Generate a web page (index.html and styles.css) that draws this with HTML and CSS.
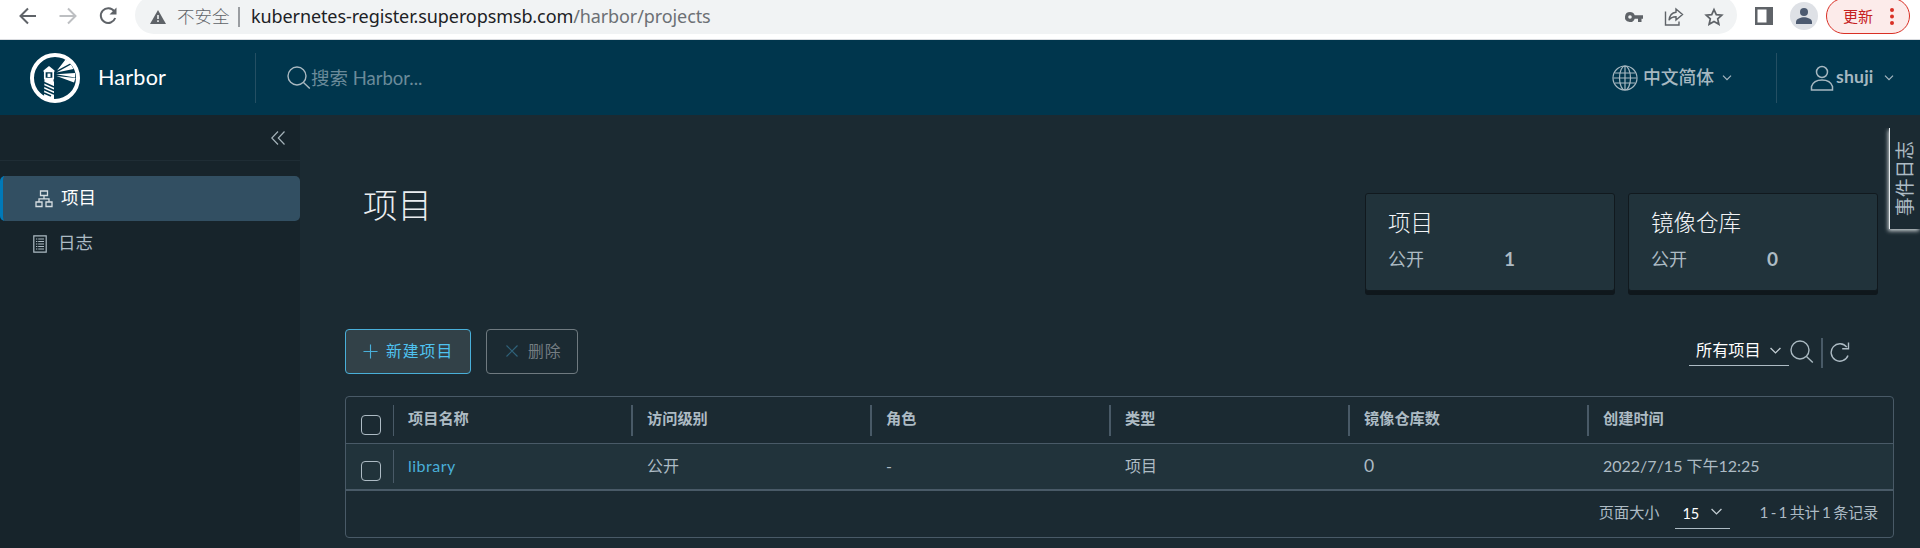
FILE: index.html
```html
<!DOCTYPE html>
<html lang="zh-CN">
<head>
<meta charset="utf-8">
<title>Harbor</title>
<link rel="stylesheet" href="styles.css">
</head>
<body>
<div class="chrome">
  <div class="nav-icons">
    <svg class="nav-icon" viewBox="0 0 20 20"><path d="M18 10H3M10 2.500L2.500 10l7.500 7.500" fill="none" stroke="#5f6368" stroke-width="2"/></svg>
    <svg class="nav-icon" viewBox="0 0 20 20"><path d="M1.500 10H17M10 2.500l7.500 7.500-7.500 7.500" fill="none" stroke="#bdbfc2" stroke-width="2"/></svg>
    <svg class="nav-icon" viewBox="0 0 20 20"><path d="M16.200 5.200A7.400 7.400 0 1 0 17.200 12" fill="none" stroke="#5f6368" stroke-width="2"/><path d="M18.500 1.500v7h-7z" fill="#5f6368"/></svg>
  </div>
  <div class="omnibox">
    <svg class="warn" viewBox="0 0 16 14"><path d="M8 0l8 14H0z" fill="#5f6368"/><path d="M7.200 5h1.600v4H7.200zM7.200 10.300h1.600v1.600H7.200z" fill="#f1f3f4"/></svg>
    <span class="insecure">不安全</span>
    <span class="omni-sep"></span>
    <span class="url">kubernetes-register.superopsmsb.com<span class="path">/harbor/projects</span></span>
    <svg class="omni-icon key" viewBox="0 0 20 20"><path d="M6 5a5 5 0 1 0 4.700 6.700H14V15h3.500v-3.300H19V8.300h-8.300A5 5 0 0 0 6 5zm0 3.200a1.800 1.800 0 1 1 0 3.600 1.800 1.800 0 0 1 0-3.600z" fill="#5f6368"/></svg>
    <svg class="omni-icon" viewBox="0 0 20 20"><path d="M1.500 4.500V18h13.500v-3.500M12 2l6.500 5.500L12 13V9.800c-3.500 0-5.500 1-7 3.400C5.500 8.500 8 5.700 12 5.200z" fill="none" stroke="#5f6368" stroke-width="1.400"/></svg>
    <svg class="omni-icon" viewBox="0 0 20 20"><path d="M10 2.600l2.300 5 5.500.6-4.100 3.700 1.200 5.400-4.900-2.800-4.900 2.800 1.200-5.400L2.200 8.200l5.500-.6z" fill="none" stroke="#5f6368" stroke-width="1.700"/></svg>
  </div>
  <svg class="panel" viewBox="0 0 18 18"><path d="M0 0h18v18H0zM2.500 2.500v13h9v-13z" fill="#5f6368" fill-rule="evenodd"/></svg>
  <svg class="avatar" viewBox="0 0 28 28"><circle cx="14" cy="14" r="14" fill="#dee1e6"/><circle cx="14" cy="10" r="4" fill="#4c5a70"/><path d="M6 22v-2.300c0-3 5-4.500 8-4.500s8 1.500 8 4.500V22z" fill="#4c5a70"/></svg>
  <div class="update"><span>更新</span><svg class="dots" viewBox="0 0 4 17"><circle cx="2" cy="2" r="2"/><circle cx="2" cy="8.500" r="2"/><circle cx="2" cy="15" r="2"/></svg></div>
</div>

<header class="header">
  <svg class="logo" viewBox="0 0 50 50">
    <circle cx="25" cy="25" r="23" fill="none" stroke="#fff" stroke-width="4"/>
    <path d="M27 17.500L35.500 6.500l5.500 3.500zM26.500 19.500l14.500-8 2.500 4.500zM26 21.300l19-1.300v4.500zM26.500 23l19 2-1.500 4.500z" fill="#fff"/>
    <path d="M19 13l5.500 4.500v1.300h-11v-1.300z" fill="#fff"/>
    <path d="M14.800 18.500h8.400v7h-8.400z" fill="none" stroke="#fff" stroke-width="1.700"/>
    <path d="M17.500 20.500h3v3.500h-3z" fill="#fff"/>
    <path d="M14.500 25.500h9v3H24v19.500l-10-3z" fill="#fff"/>
    <path d="M14 29.500l10 4.500M14 33l10 4.500M14 36.500l10 4.500M14 40l7 3" stroke="#00364d" stroke-width="1.500"/>
  </svg>
  <span class="brand">Harbor</span>
  <span class="header-sep"></span>
  <svg class="search-icon" viewBox="0 0 24 24"><circle cx="10" cy="10" r="9" /><path d="M16.500 16.500l6.300 6"/></svg>
  <span class="search-text">搜索 Harbor...</span>
  <div class="header-right">
    <svg class="globe" viewBox="0 0 26 26"><circle cx="13" cy="13" r="12"/><ellipse cx="13" cy="13" rx="5.500" ry="12"/><path d="M13 1v24M1.500 13h23M3 8h20M3 18h20"/></svg>
    <span class="lang">中文简体</span>
    <svg class="caret" viewBox="0 0 10 6"><path d="M1 .7l4 4 4-4"/></svg>
    <span class="header-sep user-sep"></span>
    <svg class="user" viewBox="0 0 24 26"><circle cx="12" cy="7" r="5.500"/><path d="M1.500 25v-3.500C3 17 7.500 15 12 15s9 2 10.500 6.500V25z"/></svg>
    <span class="username">shuji</span>
    <svg class="caret" viewBox="0 0 10 6"><path d="M1 .7l4 4 4-4"/></svg>
  </div>
</header>

<div class="body">
  <nav class="sidebar">
    <div class="collapse"><svg class="chevrons" viewBox="0 0 14 14"><path d="M7 .5L.8 7 7 13.500M13.500.5L7.300 7l6.200 6.500"/></svg></div>
    <a class="item active">
      <svg class="tree" viewBox="0 0 18 18"><path d="M5.500 1h7v4.500h-7zM1 12h6v4.500H1zM11 12h6v4.500h-6zM9 5.500v3.300M4 12V8.800h10V12"/></svg>
      <span>项目</span>
    </a>
    <a class="item">
      <svg class="log" viewBox="0 0 14 18"><path d="M.8.8h12.400v16.400H.8z"/><path d="M3 4h1.300M5.200 4h5.800M3 6.500h1.300M5.200 6.500h5.800M3 9h1.300M5.200 9h5.800M3 11.500h1.300M5.200 11.500h5.800M3 14h1.300M5.200 14h5.800"/></svg>
      <span>日志</span>
    </a>
  </nav>

  <main class="main">
    <div class="top">
      <h1 class="title">项目</h1>
      <div class="cards">
        <div class="card"><div class="card-title">项目</div><div class="card-row"><span class="card-label">公开</span><b class="card-num">1</b></div></div>
        <div class="card"><div class="card-title">镜像仓库</div><div class="card-row"><span class="card-label">公开</span><b class="card-num">0</b></div></div>
      </div>
    </div>
    <div class="toolbar">
      <button class="btn primary"><svg class="btn-icon" viewBox="0 0 16 16"><path d="M8 .5v15M.5 8h15"/></svg>新建项目</button>
      <button class="btn disabled"><svg class="btn-icon x" viewBox="0 0 12 12"><path d="M.5.5l11 11M11.500.5l-11 11"/></svg>删除</button>
      <div class="filter">
        <div class="select"><span>所有项目</span><svg class="caret select-caret" viewBox="0 0 10 6"><path d="M.5.7L5 5.200 9.500.7"/></svg></div>
        <svg class="search-icon tool-search" viewBox="0 0 24 24"><circle cx="10" cy="10" r="9"/><path d="M16.500 16.500l6.300 6"/></svg>
        <span class="tool-sep"></span>
        <svg class="refresh" viewBox="0 0 20 20"><path d="M18 13.500A8.700 8.700 0 1 1 16.800 5.200M18.500.5v6.200h-6.300"/></svg>
      </div>
    </div>
    <div class="grid">
      <div class="row head">
        <div class="check"><span class="box"></span></div>
        <div class="cell">项目名称</div><div class="cell">访问级别</div><div class="cell">角色</div><div class="cell">类型</div><div class="cell">镜像仓库数</div><div class="cell">创建时间</div>
      </div>
      <div class="row data">
        <div class="check"><span class="box"></span></div>
        <div class="cell"><a class="link">library</a></div><div class="cell">公开</div><div class="cell">-</div><div class="cell">项目</div><div class="cell num">0</div><div class="cell date">2022/7/15 下午12:25</div>
      </div>
      <div class="foot">
        <span class="size-label">页面大小</span>
        <div class="page-size"><span>15</span><svg class="caret select-caret" viewBox="0 0 10 6"><path d="M.5.7L5 5.200 9.500.7"/></svg></div>
        <span class="count">1 - 1 共计 1 条记录</span>
      </div>
    </div>
  </main>
  <div class="event-tab"><span>事件日志</span></div>
</div>
</body>
</html>
```
FILE: styles.css
```css
* { box-sizing: border-box; }
body {
  margin: 0;
  width: 1920px;
  height: 548px;
  overflow: hidden;
  background: #1b2a32;
  color: #adbbc4;
  font-family: Lato, "Noto Sans CJK SC", sans-serif;
}
svg { display: block; flex: none; }
span { white-space: nowrap; }

.chrome {
  display: flex;
  height: 40px;
  background: #fff;
  border-bottom: 1px solid #dadce0;
  font-family: "Noto Sans", "Noto Sans CJK SC", sans-serif;
}
.nav-icons { display: flex; gap: 20px; padding: 6px 0 0 18px; width: 135px; }
.nav-icon { width: 20px; height: 20px; }
.omnibox {
  display: flex;
  align-items: center;
  width: 1602px;
  height: 38px;
  margin-top: -4px;
  padding: 0 13px 0 15px;
  background: #f1f3f4;
  border-radius: 19px;
  color: #5f6368;
}
.warn { width: 16px; height: 14px; margin-top: 4px; }
.insecure { margin-left: 11px; width: 61px; font-size: 17.500px; line-height: 24px; padding-top: 2px; font-weight: 300; }
.omni-sep { width: 2px; height: 20px; margin-top: 4px; background: #9a9da1; }
.url { margin-left: 11px; flex: 1; font-size: 18px; line-height: 24px; letter-spacing: -.1px; padding-top: 1px; color: #202124; }
.path { color: #6c7074; }
.omni-icon { width: 20px; height: 20px; margin: 3px 0 0 20px; }
.panel { width: 18px; height: 18px; margin: 7px 0 0 18px; }
.avatar { width: 28px; height: 28px; margin: 2px 0 0 17px; }
.update {
  display: flex;
  align-items: center;
  justify-content: space-between;
  width: 84px;
  height: 36px;
  margin: -2px 0 0 8px;
  padding: 0 15px 0 16px;
  border: 1.500px solid #d93025;
  border-radius: 18px;
  background: #fcebea;
  color: #c5221f;
  font-size: 15px;
  line-height: 20px;
}
.dots { width: 4px; height: 17px; fill: #d93025; }

.header {
  display: flex;
  align-items: center;
  height: 75px;
  padding-left: 30px;
  background: #00364d;
}
.logo { width: 50px; height: 50px; margin-top: 1px; }
.brand { margin-left: 18px; width: 157px; padding-bottom: 2px; color: #fff; font-size: 21.600px; letter-spacing: .2px; }
.header-sep { width: 1px; height: 50px; background: #244f63; }
.search-icon { width: 24px; height: 24px; margin-left: 31px; fill: none; stroke: #a9b9c1; stroke-width: 1.400; }
.search-text { font-size: 18.500px; line-height: 24px; color: #6b8b9a; }
.header-right { display: flex; align-items: center; margin-left: auto; padding-right: 26px; color: #a6b8c1; }
.globe { width: 26px; height: 26px; margin-left: -1px; fill: none; stroke: #a6b8c1; stroke-width: 1.200; }
.lang { margin-left: 5px; width: 79px; font-size: 17.800px; line-height: 24px; padding-bottom: 2px; font-weight: 500; }
.caret { width: 10px; height: 6px; fill: none; stroke: #a6b8c1; stroke-width: 1.200; }
.user-sep { margin: 0 33px 0 44px; }
.user { width: 24px; height: 26px; fill: none; stroke: #a6b8c1; stroke-width: 1.500; }
.username { margin-left: 2px; width: 48px; padding-bottom: 2px; font-size: 17.600px; font-weight: 700; line-height: 22px; letter-spacing: .2px; }

.body { position: relative; display: flex; height: 433px; }
.sidebar { width: 300px; background: #17242b; }
.collapse { height: 46px; padding: 16px 15px 0 0; border-bottom: 1px solid #1f2d35; display: flex; justify-content: flex-end; margin-bottom: 15px; }
.chevrons { width: 14px; height: 14px; fill: none; stroke: #a5b3ba; stroke-width: 1.200; }
.item { display: flex; align-items: center; height: 45px; padding-left: 33px; font-size: 17.500px; line-height: 24px; }
.item span { padding-bottom: 2px; }
.item.active { background: #324f62; border-left: 3px solid #0079b8; border-radius: 5px; padding-left: 32px; color: #fff; }
.tree { width: 18px; height: 18px; margin: 1px 8px 0 0; fill: none; stroke: #d6dde1; stroke-width: 1.300; }
.log { width: 14px; height: 18px; margin-right: 11px; fill: none; stroke: #adbbc4; stroke-width: 1.200; }

.main { flex: 1; padding-left: 45px; }
.top { display: flex; height: 214px; padding: 60px 42px 0 18px; justify-content: space-between; }
.title { margin: 0; padding-top: 2px; font-size: 34.500px; line-height: 56px; font-weight: 300; color: #eaedf0; }
.cards { display: flex; gap: 13px; padding-top: 18px; }
.card {
  width: 250px;
  height: 98px;
  padding: 14px 22px;
  border: 1px solid #11191e;
  border-radius: 3px;
  background: #21333b;
  box-shadow: 0 4px 0 #0f171c;
}
.card-title { font-size: 22.500px; line-height: 30px; font-weight: 300; color: #f2f4f6; }
.card-row { display: flex; align-items: center; padding-top: 7px; font-size: 18px; line-height: 28px; }
.card-label { width: 116px; }
.card-num { font-size: 19px; }

.toolbar { display: flex; height: 67px; }
.btn {
  display: flex;
  align-items: center;
  height: 45px;
  border: 1px solid #49afd9;
  border-radius: 4px;
  font: 15.800px/20px Lato, "Noto Sans CJK SC", sans-serif;
  letter-spacing: 1px;
}
.primary { width: 126px; padding: 0 0 1px 17px; background: #324148; color: #4fc3f0; }
.disabled { width: 92px; margin-left: 15px; padding: 0 0 1px 19px; background: transparent; border-color: #6f7a80; color: #747d82; }
.btn-icon { width: 15px; height: 15px; margin-right: 8px; fill: none; stroke: #49afd9; stroke-width: 1.200; }
.btn-icon.x { width: 12px; height: 12px; margin-right: 10px; stroke: #2f627a; }
.filter { display: flex; margin-left: auto; padding-right: 70px; }
.select { display: flex; align-items: center; justify-content: space-between; width: 100px; height: 28px; margin-top: 9px; padding: 0 8px 3px 7px; border-bottom: 1px solid #adbbc4; font-size: 16.200px; line-height: 24px; color: #fff; }
.select-caret { width: 11px; height: 7px; stroke: #c3cdd3; }
.tool-search { margin: 11px 0 0 1px; }
.tool-sep { width: 2px; height: 30px; margin: 9px 7px 0 7px; background: #495a67; }
.refresh { width: 20px; height: 20px; margin-top: 13px; fill: none; stroke: #adbbc4; stroke-width: 1.400; }

.grid { width: 1549px; height: 142px; border: 1px solid #495a67; border-radius: 4px; }
.row { display: flex; }
.head { height: 47px; border-bottom: 1px solid #495a67; font-size: 15.200px; font-weight: 700; }
.data { height: 47px; border-bottom: 2px solid #495a67; background: #21333b; font-size: 16px; }
.check { width: 48px; padding: 18px 0 0 15px; }
.data .check { padding-top: 17px; }
.box { display: block; width: 20px; height: 20px; border: 1.500px solid #adbbc4; border-radius: 4px; }
.cell { width: 239px; display: flex; line-height: 43px; }
.cell::before { content: ""; flex: none; width: 2px; height: 31px; margin: 8px 14px 0 -2px; background: #495a67; }
.data .cell::before { background: transparent; }
.check + .cell::before { width: 1px; margin-left: -1px; }
.data .check + .cell::before { background: #495a67; height: 33px; margin-top: 6px; }
.link { color: #49afd9; letter-spacing: .5px; }
.num { font-size: 17.500px; }
.foot { display: flex; justify-content: flex-end; padding-right: 15px; font-size: 15.200px; line-height: 42px; }
.page-size { display: flex; align-items: center; justify-content: space-between; width: 55px; height: 37px; margin: 1px 30px 0 15px; padding: 5px 8px 0 8px; border-bottom: 1px solid #adbbc4; color: #fff; line-height: 24px; }
.page-size span { font-size: 14.500px; padding-top: 2px; letter-spacing: -.3px; }
.page-size .caret { margin-top: -3px; }
.count { word-spacing: -1.100px; letter-spacing: -.25px; }

.event-tab {
  position: absolute;
  right: 0;
  top: 13px;
  width: 31px;
  height: 101px;
  display: flex;
  align-items: center;
  justify-content: center;
  border-left: 1.500px solid #e8ecee;
  background: #1b2a32;
  box-shadow: -1px 2px 4px #c8ced1;
  clip-path: inset(0 0 -8px -8px);
}
.event-tab span { writing-mode: vertical-rl; text-orientation: sideways; transform: rotate(180deg); font-size: 18.800px; line-height: 24px; }
```
